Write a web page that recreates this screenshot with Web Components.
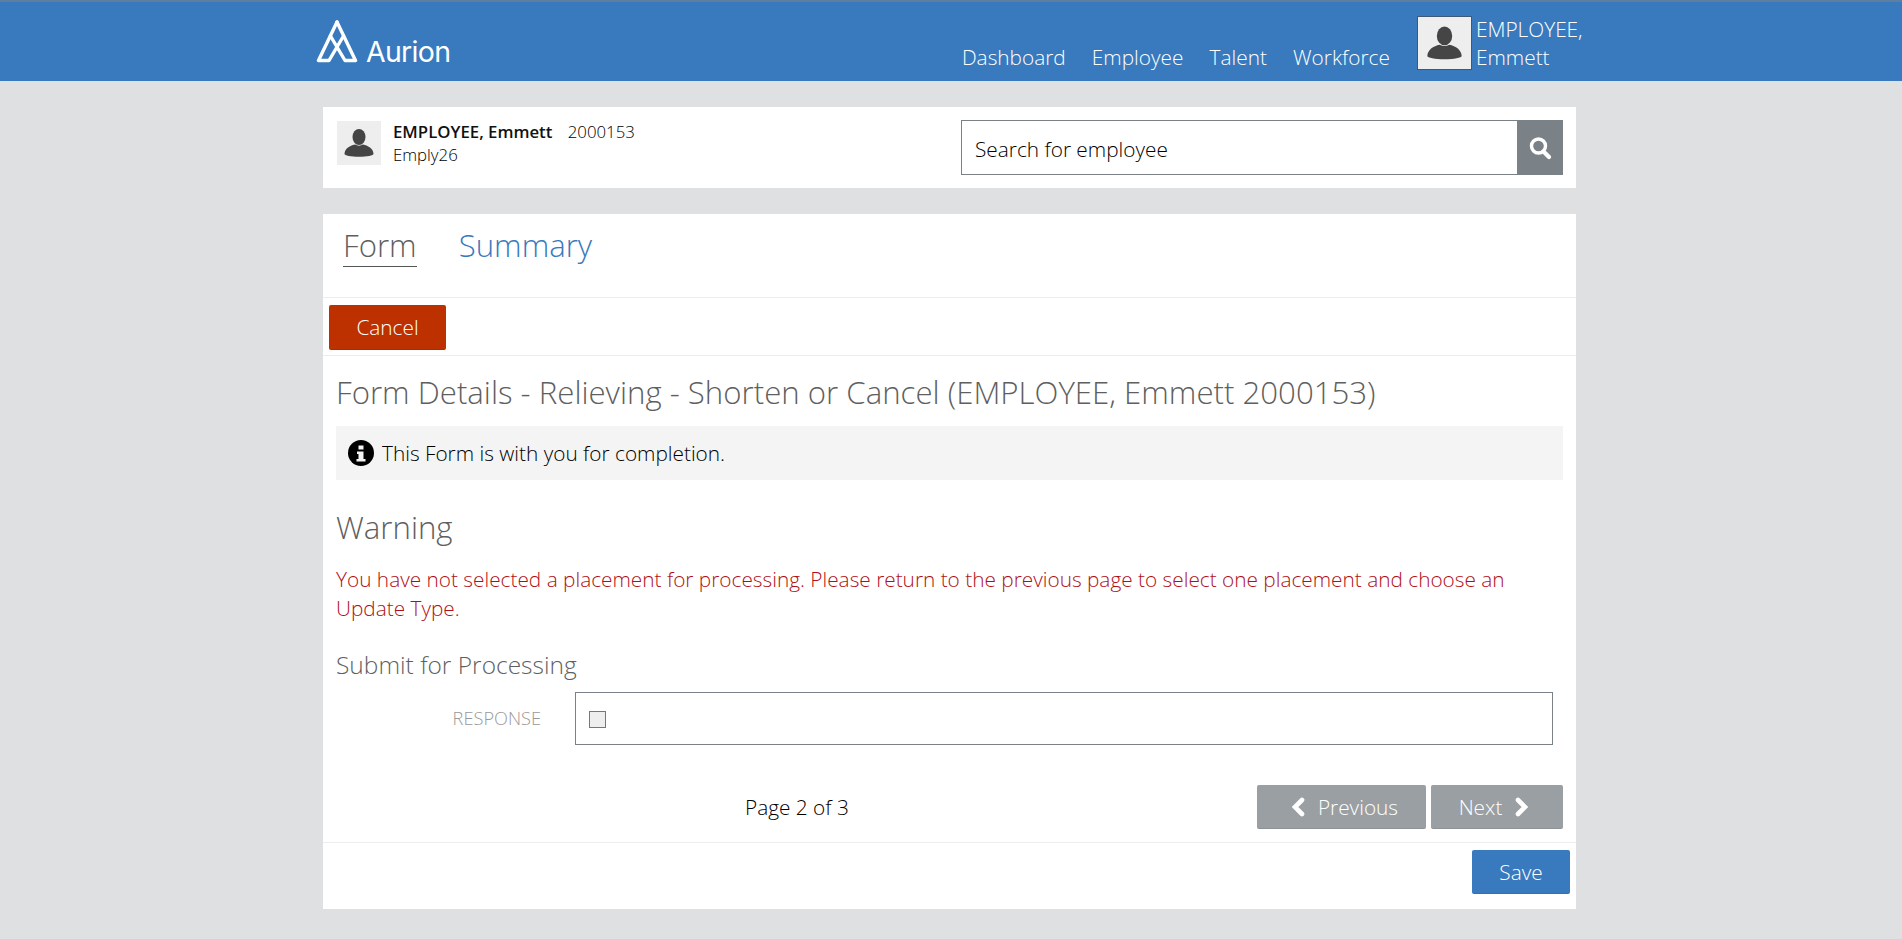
<!DOCTYPE html>
<html>
<head>
<meta charset="utf-8">
<title>Aurion</title>
<style>
    html, body { margin: 0; padding: 0; }
    body { background: #dee0e2; font-family: 'Open Sans', sans-serif; font-weight: 300; min-height: 939px; }
</style>
</head>
<body>
<aurion-header></aurion-header>
<main-column>
    <employee-bar></employee-bar>
    <form-card></form-card>
</main-column>

<script>
const PERSON = `<svg viewBox="0 0 44 44" width="100%" height="100%"><ellipse cx="22" cy="16" rx="6.5" ry="8" fill="#454545"/><path d="M7.500 33c0-5 5-8.500 10.500-9.500 2.500 1.500 5.500 1.500 8 0 5.500 1 10.500 4.500 10.500 9.500 0 1.500-6.500 2.800-14.500 2.800S7.500 34.500 7.500 33z" fill="#454545"/></svg>`;

class AurionHeader extends HTMLElement {
    constructor() {
        super();
        this.attachShadow({mode: 'open'});
        this.shadowRoot.innerHTML = `
        <style>
            :host { display: block; height: 79px; background: #387abd; border-top: 2px solid #5f7f9f; color: #fff; font-size: 20.8px; }
            .inner { width: 1270px; margin: 0 auto; box-sizing: border-box; height: 100%; display: flex; }
            .logo { display: flex; align-items: flex-end; margin-top: 18px; height: 44px; }
            .logo svg { display: block; }
            .word { font-family: 'Inter', sans-serif; font-size: 28.5px; font-weight: 400; line-height: 30px; margin-left: 8px; letter-spacing: -0.7px; position: relative; top: 3px; }
            nav { margin-left: auto; display: flex; align-items: flex-start; padding-top: 14px; }
            a { display: block; margin-top: 27px; line-height: 29px; margin-right: 26.2px; }
            a:last-of-type { margin-right: 27.2px; }
            .user { display: flex; }
            .pic { width: 55px; height: 54px; box-sizing: border-box; background: #efeeef; border: 1px solid #3f5873; margin-right: 4px; }
            .name { line-height: 28px; margin-top: -1px; width: 110px; }
        </style>
        <div class="inner">
            <div class="logo">
                <svg width="42" height="44" viewBox="0 0 42 44" fill="none" stroke="#fff" stroke-width="3.4" stroke-linejoin="round" stroke-linecap="round">
                    <path d="M21 2 L39.500 40.500 H29 L14.500 16"/>
                    <path d="M21 2 L2.500 40.500 H13 L27.500 16"/>
                </svg>
                <span class="word">Aurion</span>
            </div>
            <nav>
                <a>Dashboard</a>
                <a>Employee</a>
                <a>Talent</a>
                <a>Workforce</a>
                <div class="user">
                    <div class="pic">${PERSON}</div>
                    <div class="name">EMPLOYEE, Emmett</div>
                </div>
            </nav>
        </div>`;
    }
}

class MainColumn extends HTMLElement {
    constructor() {
        super();
        this.attachShadow({mode: 'open'});
        this.shadowRoot.innerHTML = `
        <style>
            :host { display: flex; flex-direction: column; gap: 26px; width: 1253px; margin: 26px 0 0 323px; }
        </style>
        <slot></slot>`;
    }
}

class EmployeeBar extends HTMLElement {
    constructor() {
        super();
        this.attachShadow({mode: 'open'});
        this.shadowRoot.innerHTML = `
        <style>
            :host { display: flex; height: 81px; background: #fff; box-sizing: border-box; padding: 14px 13px 0 14px; color: #000; font-size: 16.8px; }
            .pic { width: 44px; height: 44px; background: #efeeef; }
            .info { margin-left: 12px; line-height: 23px; margin-top: -1px; }
            b { font-weight: 600; margin-right: 11px; color: #111; }
            .search { margin-left: auto; display: flex; width: 602px; height: 55px; margin-top: -1px; }
            .input { flex: 1; box-sizing: border-box; border: 1px solid #7b8186; border-right: 0; padding-left: 13px; font-size: 20.8px; line-height: 56px; color: #000; }
            .btn { width: 46px; background: #7b8287; display: flex; align-items: center; justify-content: center; }
        </style>
        <div class="pic">${PERSON}</div>
        <div class="info"><b>EMPLOYEE, Emmett</b> 2000153<br>Emply26</div>
        <div class="search">
            <div class="input">Search for employee</div>
            <div class="btn"><svg width="24" height="24" viewBox="0 0 24 24" fill="none" stroke="#fff"><circle cx="10.500" cy="10" r="7" stroke-width="3.4"/><path d="M15.500 15.500 L21 21" stroke-width="4.2" stroke-linecap="round"/></svg></div>
        </div>`;
    }
}

class AuButton extends HTMLElement {
    constructor() {
        super();
        this.attachShadow({mode: 'open'});
        this.shadowRoot.innerHTML = `
        <style>
            :host { display: inline-flex; align-items: center; justify-content: center; box-sizing: border-box; border-radius: 2px; color: #fff; font-size: 20.8px; background: var(--bg, #387abd); border-bottom: 1px solid rgba(0,0,0,.08); width: var(--w); height: var(--h, 44px); gap: 13px; }
        </style>
        <slot></slot>`;
    }
}

class FormCard extends HTMLElement {
    constructor() {
        super();
        this.attachShadow({mode: 'open'});
        this.shadowRoot.innerHTML = `
        <style>
            :host { display: block; background: #fff; height: 695px; color: #000; }
            .tabs { height: 84px; box-sizing: border-box; border-bottom: 1px solid #eceeee; display: flex; align-items: flex-start; padding: 10px 0 0 20px; font-size: 31.2px; gap: 42px; }
            .tab { height: 43px; line-height: 43px; box-sizing: border-box; }
            .active { color: #5f5f5f; border-bottom: 1px solid #555; }
            .link { color: #387abd; }
            .actions { height: 58px; box-sizing: border-box; border-bottom: 1px solid #eceeee; padding: 7px 0 0 6px; }
            .cancel { --bg: #bd3100; --w: 117px; --h: 45px; }
            .body { padding: 0 13px; height: 486px; box-sizing: border-box; }
            h1 { margin: 0; font-weight: 300; font-size: 31.2px; line-height: 40px; color: #5f5f5f; padding-top: 16px; }
            .alert { background: #f4f4f4; height: 54px; margin-top: 14px; display: flex; align-items: center; padding-left: 12px; font-size: 20.8px; gap: 8px; color: #000; }
            h2 { margin: 0; font-weight: 300; font-size: 31.2px; line-height: 40px; color: #5f5f5f; padding-top: 27px; }
            p { margin: 18px 0 0; font-size: 20.8px; line-height: 29px; color: #b00f17; }
            h3 { margin: 0; font-weight: 300; font-size: 24.5px; line-height: 32px; color: #5f5f5f; padding-top: 26px; }
            .row { display: flex; margin-top: 11px; height: 53px; }
            label { width: 205px; text-align: right; font-size: 18.2px; color: #999; line-height: 52px; flex: none; }
            .box { margin-left: 34px; width: 978px; height: 53px; box-sizing: border-box; border: 1px solid #7b8186; display: flex; align-items: center; padding-left: 13px; }
            .check { width: 17px; height: 17px; box-sizing: border-box; background: #eee; border: 1px solid #777; margin-top: 1px; }
            .pager { display: flex; align-items: center; margin-top: 40px; height: 44px; }
            .pageno { margin-left: 409px; font-size: 20.8px; color: #000; }
            .navs { margin-left: auto; display: flex; gap: 5px; }
            .prev { --bg: #9a9fa3; --w: 169px; padding-left: 5px; }
            .next { --bg: #9a9fa3; --w: 132px; padding-right: 5px; }
            .foot { border-top: 1px solid #eceeee; padding: 7px 6px 0; display: flex; justify-content: flex-end; }
            .save { --w: 98px; }
        </style>
        <div class="tabs"><div class="tab active">Form</div><div class="tab link">Summary</div></div>
        <div class="actions"><au-button class="cancel">Cancel</au-button></div>
        <div class="body">
            <h1>Form Details - Relieving - Shorten or Cancel (EMPLOYEE, Emmett 2000153)</h1>
            <div class="alert">
                <svg width="26" height="26" viewBox="0 0 26 26"><circle cx="13" cy="13" r="13" fill="#000"/><path d="M10.500 5.500h5v4h-5zM9 11.500h6.500v7.500h2v2.500H8.500V19h2v-5H9z" fill="#f4f4f4"/></svg>
                <span>This Form is with you for completion.</span>
            </div>
            <h2>Warning</h2>
            <p>You have not selected a placement for processing. Please return to the previous page to select one placement and choose an Update Type.</p>
            <h3>Submit for Processing</h3>
            <div class="row"><label>RESPONSE</label><div class="box"><div class="check"></div></div></div>
            <div class="pager">
                <span class="pageno">Page 2 of 3</span>
                <div class="navs">
                    <au-button class="prev"><svg width="15" height="20" viewBox="0 0 15 20" fill="none" stroke="#fff" stroke-width="4.6" stroke-linejoin="miter" stroke-linecap="round"><path d="M12 3 L5 10 L12 17"/></svg>Previous</au-button>
                    <au-button class="next">Next<svg width="15" height="20" viewBox="0 0 15 20" fill="none" stroke="#fff" stroke-width="4.6" stroke-linejoin="miter" stroke-linecap="round"><path d="M3 3 L10 10 L3 17"/></svg></au-button>
                </div>
            </div>
        </div>
        <div class="foot"><au-button class="save">Save</au-button></div>`;
    }
}

window.customElements.define('aurion-header', AurionHeader);
window.customElements.define('main-column', MainColumn);
window.customElements.define('employee-bar', EmployeeBar);
window.customElements.define('au-button', AuButton);
window.customElements.define('form-card', FormCard);
</script>
</body>
</html>
